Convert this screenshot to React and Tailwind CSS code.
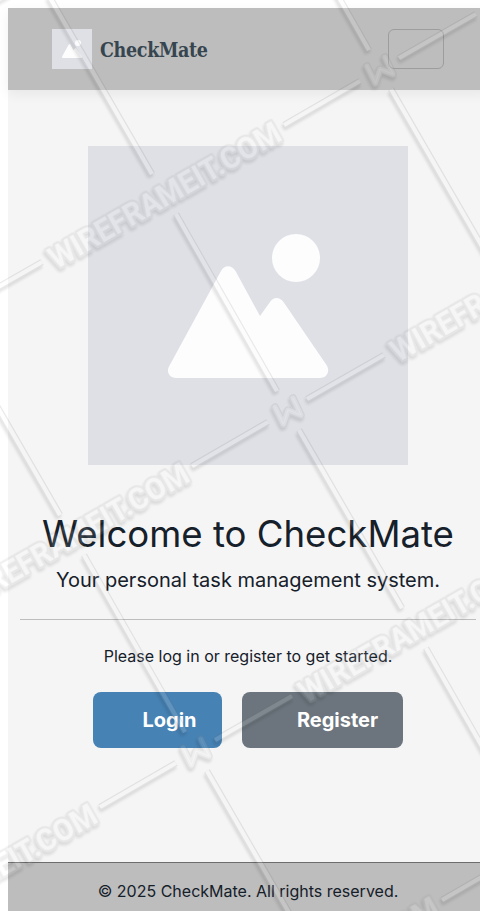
const NODES = [
  [380, 71], [288, 412], [196, 753], [38, -22], [-54, 319],
  [722, 164], [630, 505], [538, 846],
];

function Placeholder({ className }) {
  return (
    <svg className={className} viewBox="0 0 320 320" preserveAspectRatio="xMidYMin slice" aria-hidden="true">
      <rect width="320" height="320" fill="#dfe0e6" />
      <circle cx="208" cy="112" r="24" fill="#fdfdfd" />
      <path
        d="M88 232c-6.400 0-10-6-7-11.500L133 125c3-6.500 11-6.500 14.500 0L172 170l10-14c3.500-5.500 9.500-5.500 13.500 0L238.500 219c4 6 .5 13-6.500 13z"
        fill="#fdfdfd"
      />
    </svg>
  );
}

function Bar({ x1, y1, x2, y2 }) {
  return (
    <>
      <line x1={x1} y1={y1} x2={x2} y2={y2} stroke="#707070" strokeWidth="6.5" />
      <line x1={x1} y1={y1} x2={x2} y2={y2} stroke="#fafafa" strokeWidth="4.2" />
    </>
  );
}

function WatermarkUnit({ x, y }) {
  const w = "M-13 -5L-4.500 12L0 -2L13 3L5 -14";
  return (
    <g transform={`translate(${x} ${y})`} filter="url(#emboss)">
      <Bar x1={-20} y1={10} x2={-96} y2={54} />
      <Bar x1={19} y1={-13} x2={96} y2={-57} />
      <Bar x1={11} y1={18} x2={114} y2={196} />
      <Bar x1={-11} y1={-21} x2={-112} y2={-198} />
      <g fill="none" strokeLinejoin="round" strokeLinecap="round">
        <path d={w} stroke="#808080" strokeWidth="7.5" />
        <path d={w} stroke="#d0d0d0" strokeWidth="5" />
        <path d={w} stroke="#fff" strokeWidth="1" />
      </g>
      <text
        transform="translate(-216 123) rotate(-29.800)"
        x="-131"
        y="12"
        textLength="262"
        lengthAdjust="spacingAndGlyphs"
        className="font-['Roboto',sans-serif] text-[32px] font-bold"
        fill="#fff"
        stroke="#989898"
        strokeWidth="4.5"
        strokeLinejoin="round"
        paintOrder="stroke"
      >
        WIREFRAMEIT.COM
      </text>
    </g>
  );
}

function Watermark() {
  return (
    <svg className="pointer-events-none absolute inset-0 z-10" width="480" height="911" aria-hidden="true">
      <defs>
        <filter id="emboss" filterUnits="userSpaceOnUse" x="-370" y="-230" width="520" height="480" colorInterpolationFilters="sRGB">
          <feGaussianBlur in="SourceAlpha" stdDeviation="1.6" />
          <feOffset dx="-1" dy="3" />
          <feComposite in2="SourceAlpha" operator="out" />
          <feComponentTransfer result="shade">
            <feFuncA type="linear" slope="0.11" />
          </feComponentTransfer>
          <feComponentTransfer in="SourceGraphic" result="face">
            <feFuncA type="linear" slope="0.15" />
          </feComponentTransfer>
          <feMerge>
            <feMergeNode in="shade" />
            <feMergeNode in="face" />
          </feMerge>
        </filter>
      </defs>
      {NODES.map(([x, y]) => (
        <WatermarkUnit key={`${x},${y}`} x={x} y={y} />
      ))}
    </svg>
  );
}

export default function App() {
  return (
    <div className="relative h-[911px] w-[480px] overflow-hidden bg-white pl-2 pt-2 font-['Inter',sans-serif] text-[#15202a]">
      <div className="flex h-[903px] w-[480px] flex-col bg-[#f5f5f5]">
        <header className="flex h-[82px] shrink-0 items-center justify-between bg-[#bdbdbd] px-11 shadow-[0_4px_12px_rgba(0,0,0,0.06)]">
          <a className="flex items-center gap-2">
            <Placeholder className="size-10" />
            <span className="inline-block whitespace-nowrap pt-[3px] font-['DejaVu_Serif_Condensed','DejaVu_Serif',serif] text-[19.5px] font-bold leading-6 tracking-[-0.35px] text-[#36454f]">
              CheckMate
            </span>
          </a>
          <button aria-label="Toggle navigation" className="h-10 w-14 rounded-md border border-[#9c9d9e]" />
        </header>
        <main className="flex grow flex-col items-center px-3 pt-14 text-center">
          <Placeholder className="h-[319px] w-80 shrink-0" />
          <h1 className="mt-[45px] whitespace-nowrap text-[36.6px] leading-[48px]">Welcome to CheckMate</h1>
          <p className="mt-[7px] text-xl leading-[30px]">Your personal task management system.</p>
          <hr className="mt-6 w-full border-t border-[#bcbdbe]" />
          <p className="mt-6 text-base leading-6">Please log in or register to get started.</p>
          <div className="mt-6 flex gap-5 text-xl font-bold text-white">
            <button className="h-14 w-[129px] rounded-lg bg-[#4682b4] pl-6">Login</button>
            <button className="h-14 w-[161px] rounded-lg bg-[#6c757d] pl-[30px]">Register</button>
          </div>
        </main>
        <footer className="h-[49px] shrink-0 border-t border-[#6c6d6e] bg-[#bdbdbd] pt-4 text-center text-base leading-6">
          © 2025 CheckMate. All rights reserved.
        </footer>
      </div>
      <Watermark />
    </div>
  );
}
